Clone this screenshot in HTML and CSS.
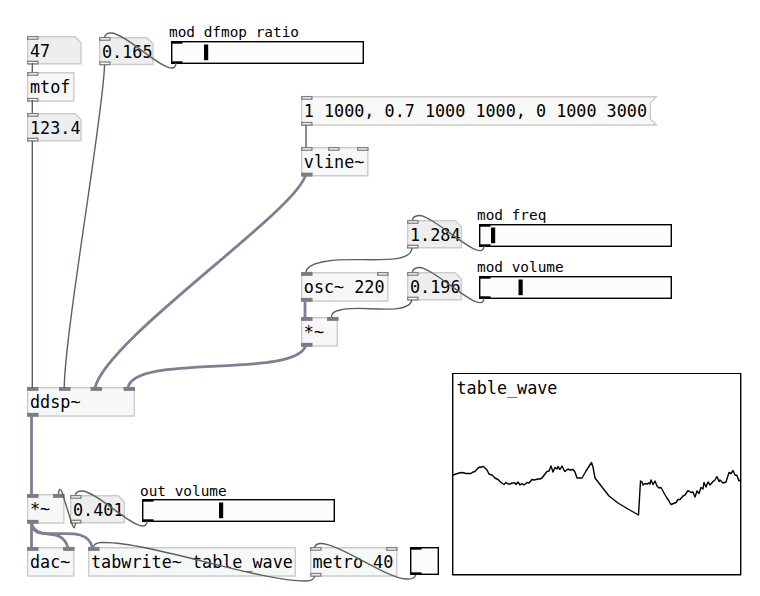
FILE: index.html
```
<!DOCTYPE html>
<html lang="en">
<head>
<meta charset="utf-8">
<title>Patch</title>
<link rel="stylesheet" href="styles.css">
</head>
<body>
<main class="canvas" id="canvas">
  <svg class="cords" id="cords" width="760" height="596" viewBox="0 0 760 596">
    <g class="control">
      <path d="M32.300 63V72M32.300 100V113M32.300 141V388M306 125V147"/>
      <path d="M104.500 65C104 110 65 330 64.200 388"/>
      <path d="M176 63C175 84 127 33 111 33Q105 33 104.500 38"/>
      <path d="M412 248C411 267 355 256 328 261Q307 264 306 272"/>
      <path d="M412 300C408 317 357 304 340 310Q331 312 331.500 317"/>
      <path d="M484 246C483 266 434 215 419 215.500Q413 216 412.500 220"/>
      <path d="M484 298C483 318 434 267 419 267.500Q413 268 412.500 272"/>
      <path d="M147 521C146 542 98 491 82 491Q76 491 75.500 495"/>
      <path d="M75.500 523C74 532 73 526 71 521L62 492Q59 486 58.500 494"/>
      <path d="M314.500 576Q314 581 306 581C262 582 150 542 103 542.500Q94 542 93 548"/>
      <path d="M415.500 575Q415 579 408 579C390 581 340 543 320 543.500Q315 544 314.500 548"/>
    </g>
    <g class="signal">
      <path d="M31.500 416V495M31.500 522V548M305 300V318"/>
      <path d="M305.500 175C297 211 105 340 95 388"/>
      <path d="M305.500 346C294 379 133 353 128 388"/>
      <path d="M31.500 523C33 543 62 524 68 548"/>
      <path d="M31.500 523C36 547 86 519 92.500 548"/>
    </g>
  </svg>

  <div class="array">
    <svg class="wave" width="290" height="203" viewBox="452 373 290 203">
      <rect x="452.700" y="373.300" width="288" height="201.400"/>
      <polyline points="453,475 456,474 459,473 462,472.500 466,473.500 471,473.500 473,472 475,471.500 478,468 480,467 481,467.500 483,466.300 485,468 487,470 489,474 492,475 495,478 498,479.500 501,482.500 504,484.500 506,482.500 508,484 510,484 512,483 515,483 516,484.500 518,482 520,485 522,483.500 524,485 527,482.500 529,483 532,479.500 534,480 536,479.500 538,479 540,479 542,478 545,474 547,471.500 549,471 551,466 553,472 555,467.500 557,469 558,466.500 560,469.500 562,466 564,470 565,471.500 568,469 570,470 573,469.500 575,472 577,478 582,478 586,471 591.500,462.500 593,467 595,478 602,487 609,496 618,503 628,509 638.500,515 640.500,481 642,482 643,485 645,483.500 647,484 649,483 650,484 651,480 653,484.500 655,481 657,486 659,488 661,487.500 664,493 667,498 669,501 671,504.500 676,502.500 678,499.500 680,499.500 683,496 685,495 688,490.500 691,492.500 693,492 695,497 697,491 699,493.500 701,487.500 703,489 704,482.500 706,487 708,482 710,485 713,481.500 715,480 717,476.500 719,481.500 720,480 723,483 726,482 729,472.500 731,473.500 733,470.500 735,475 737,475.500 739,481 741,479.500"/>
    </svg>
    <div class="array-name">table_wave</div>
  </div>
</main>
<script src="patch.js"></script>
</body>
</html>
```
FILE: styles.css
```
body { margin: 0; background: #fff; }
.canvas {
  position: relative; width: 760px; height: 596px; overflow: hidden;
  font-family: "DejaVu Sans Mono", monospace; font-size: 16.78px; color: #000;
}
.node { position: absolute; }
.shape { position: absolute; left: 0; top: 0; display: block; overflow: visible; }
.shape path { stroke: #ccc; stroke-width: 1.4; fill: #f6f8f8; }
.number .shape path { fill: #eee; }
.message .shape path { fill: #f8f8f6; }
.shape .port { stroke: #808080; stroke-width: 1.3; fill: #fff; }
.shape .port.sig { stroke: #7c7b86; fill: #7c7b86; }
.node .text {
  position: relative; display: block; padding-left: 3px; white-space: pre; line-height: 30px;
  transform: scaleY(1.08);
}
.control-box { position: absolute; }
.shape .frame { stroke: #000; stroke-width: 1.4; fill: #fcfcfc; }
.shape .mark { fill: #000; }
.label { position: absolute; font-size: 14.4px; line-height: 17px; white-space: pre; }
.cords { position: absolute; left: 0; top: 0; z-index: 2; pointer-events: none; }
.cords path { fill: none; }
.control { stroke: #566656; stroke-width: 1.4; }
.signal { stroke: #807e94; stroke-width: 2.8; }
.array { position: absolute; left: 452px; top: 373px; width: 290px; height: 203px; }
.array-name { position: absolute; left: 4.500px; top: 5px; line-height: 20px; transform: scaleY(1.08); }
.wave { position: absolute; left: 0; top: 0; }
.wave rect, .wave polyline { fill: none; stroke: #000; stroke-width: 1.4; stroke-linejoin: round; }
```
FILE: patch.js
```
// Ports are listed as [offset, isSignal].
const nodes = [
  { k: "number", x: 27, y: 35.5, w: 54.7, h: 28.5, t: "47", i: [[0, 0]], o: [[0, 0]] },
  { k: "object", x: 27, y: 71.5, w: 47.5, h: 29.7, t: "mtof", i: [[0, 0]], o: [[0, 0]] },
  { k: "number", x: 27, y: 113, w: 54.7, h: 28.5, t: "123.4", i: [[0, 0]], o: [[0, 0]] },
  { k: "number", x: 99, y: 37, w: 54.7, h: 28.2, t: "0.165", i: [[0, 0]], o: [[0, 0]] },
  { k: "message", x: 300.8, y: 96, w: 356, h: 29.7, t: "1 1000, 0.7 1000 1000, 0 1000 3000", i: [[0, 0]], o: [[0, 0]] },
  { k: "object", x: 300.8, y: 146.5, w: 67.5, h: 29.5, t: "vline~", i: [[0, 0], [27, 0], [56, 0]], o: [[0, 1]] },
  { k: "number", x: 407, y: 219.7, w: 55, h: 28.5, t: "1.284", i: [[0, 0]], o: [[0, 0]] },
  { k: "number", x: 407, y: 271.5, w: 55, h: 28.5, t: "0.196", i: [[0, 0]], o: [[0, 0]] },
  { k: "object", x: 300.8, y: 271.5, w: 87.5, h: 29.7, t: "osc~ 220", i: [[0, 1], [76, 0]], o: [[0, 1]] },
  { k: "object", x: 300.8, y: 316.5, w: 37, h: 29.7, t: "*~", i: [[0, 1], [26, 1]], o: [[0, 1]] },
  { k: "object", x: 27, y: 387, w: 108, h: 29.7, t: "ddsp~", i: [[0, 1], [32, 1], [63.500, 1], [96.500, 1]], o: [[0, 1]] },
  { k: "object", x: 27, y: 493.7, w: 37.5, h: 29.7, t: "*~", i: [[0, 1], [26, 1]], o: [[0, 1]] },
  { k: "number", x: 70, y: 495, w: 55, h: 28.5, t: "0.401", i: [[0, 0]], o: [[0, 0]] },
  { k: "object", x: 27, y: 547, w: 47.5, h: 29.7, t: "dac~", i: [[0, 1], [36, 1]], o: [] },
  { k: "object", x: 88, y: 547, w: 208, h: 29.7, t: "tabwrite~ table_wave", i: [[0, 1]], o: [] },
  { k: "object", x: 309.5, y: 547, w: 87.5, h: 29.7, t: "metro 40", i: [[0, 0], [76, 0]], o: [[0, 0]] }
];
// Framed controls: [x, y, width, height, thumb offset or null]
const controls = [
  [171, 41, 193, 23, 33], [479, 224, 193, 23, 12], [479, 276, 193, 23, 39.5],
  [142, 499, 193, 23, 77], [410, 547, 29, 28, null]
];
const labels = [[169, 24, "mod dfmop ratio"], [477, 207, "mod freq"], [477, 259, "mod volume"], [140, 483, "out volume"]];

function outline(k, w, h) {
  const a = 0.7, r = w - 0.7, b = h - 0.7;
  if (k === "number") return `M${a} ${a}H${r - 6}L${r} ${a + 6}V${b}H${a}Z`;
  if (k === "message") return `M${a} ${a}H${r}L${r - 6} ${a + 6}V${b - 6}L${r} ${b}H${a}Z`;
  return `M${a} ${a}H${r}V${b}H${a}Z`;
}
const port = (y, p) => `<rect class="port${p[1] ? " sig" : ""}" x="${p[0] + 0.7}" y="${y}" width="10.2" height="2.6"/>`;

let html = "";
for (const n of nodes) {
  const ports = n.i.map(p => port(0.6, p)).join("") + n.o.map(p => port(n.h - 3.2, p)).join("");
  html += `<div class="node ${n.k}" style="left:${n.x}px;top:${n.y}px;width:${n.w}px;height:${n.h}px">
    <svg class="shape" width="${n.w}" height="${n.h}"><path d="${outline(n.k, n.w, n.h)}"/>${ports}</svg>
    <span class="text">${n.t}</span></div>`;
}
for (const [x, y, w, h, v] of controls) {
  const thumb = v === null ? "" : `<rect class="mark" x="${v}" y="3.500" width="4.200" height="15.700"/>`;
  html += `<div class="control-box" style="left:${x}px;top:${y}px"><svg class="shape" width="${w}" height="${h}">
    <rect class="frame" x="0.700" y="0.700" width="${w - 1.4}" height="${h - 1.4}"/>
    <rect class="mark" x="0.500" y="0" width="11" height="2.700"/>
    <rect class="mark" x="0.500" y="${h - 2.7}" width="11" height="2.700"/>${thumb}</svg></div>`;
}
for (const [x, y, t] of labels) {
  html += `<div class="label" style="left:${x}px;top:${y}px">${t}</div>`;
}
document.getElementById("cords").insertAdjacentHTML("beforebegin", html);
```
